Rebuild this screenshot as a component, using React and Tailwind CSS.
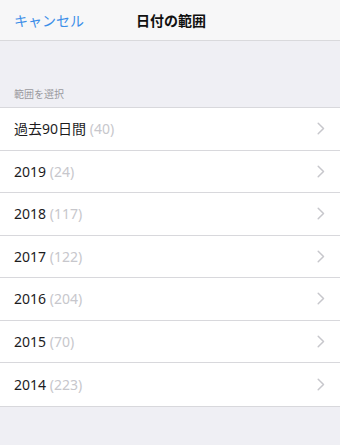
import React from 'react';

const rows = [
  { label: '過去90日間', count: 40 },
  { label: '2019', count: 24 },
  { label: '2018', count: 117 },
  { label: '2017', count: 122 },
  { label: '2016', count: 204 },
  { label: '2015', count: 70 },
  { label: '2014', count: 223 },
];

const Chevron = () => (
  <svg width="8" height="13" viewBox="0 0 8 13" fill="none">
    <path d="M1.2 1.2 L6.5 6.5 L1.2 11.8" stroke="#c7c7cc" strokeWidth="1.5" strokeLinecap="round" strokeLinejoin="round" />
  </svg>
);

export default function App() {
  return (
    <div
      className="w-[340px] h-[445px] bg-[#efeff4] flex flex-col"
      style={{ fontFamily: '"Noto Sans", "Noto Sans CJK JP", sans-serif' }}
    >
      {/* Nav bar */}
      <div className="h-[41px] bg-[#f7f7f8] border-b border-[#d9d9dc] flex items-center relative">
        <span className="pl-[14px] text-[14px] text-[#3b8ee8]">キャンセル</span>
        <span className="absolute left-0 right-0 text-center text-[14px] font-bold text-[#111] pointer-events-none pl-[2px]">
          日付の範囲
        </span>
      </div>

      {/* Section header */}
      <div className="h-[66px] flex items-end pb-[5px] pl-[14px]">
        <span className="text-[10px] text-[#9a9a9f]">範囲を選択</span>
      </div>

      {/* List */}
      <div className="bg-white border-t border-b border-[#d8d8dc]">
        {rows.map((r, i) => (
          <div
            key={r.label}
            className={`h-[42.5px] flex items-center justify-between pl-[14px] pr-[15px] ${
              i < rows.length - 1 ? 'border-b border-[#d8d8dc]' : ''
            }`}
          >
            <span className="text-[14px] text-[#1c1c1e]">
              {r.label} <span className="text-[#c7c7cc]">({r.count})</span>
            </span>
            <Chevron />
          </div>
        ))}
      </div>
    </div>
  );
}
